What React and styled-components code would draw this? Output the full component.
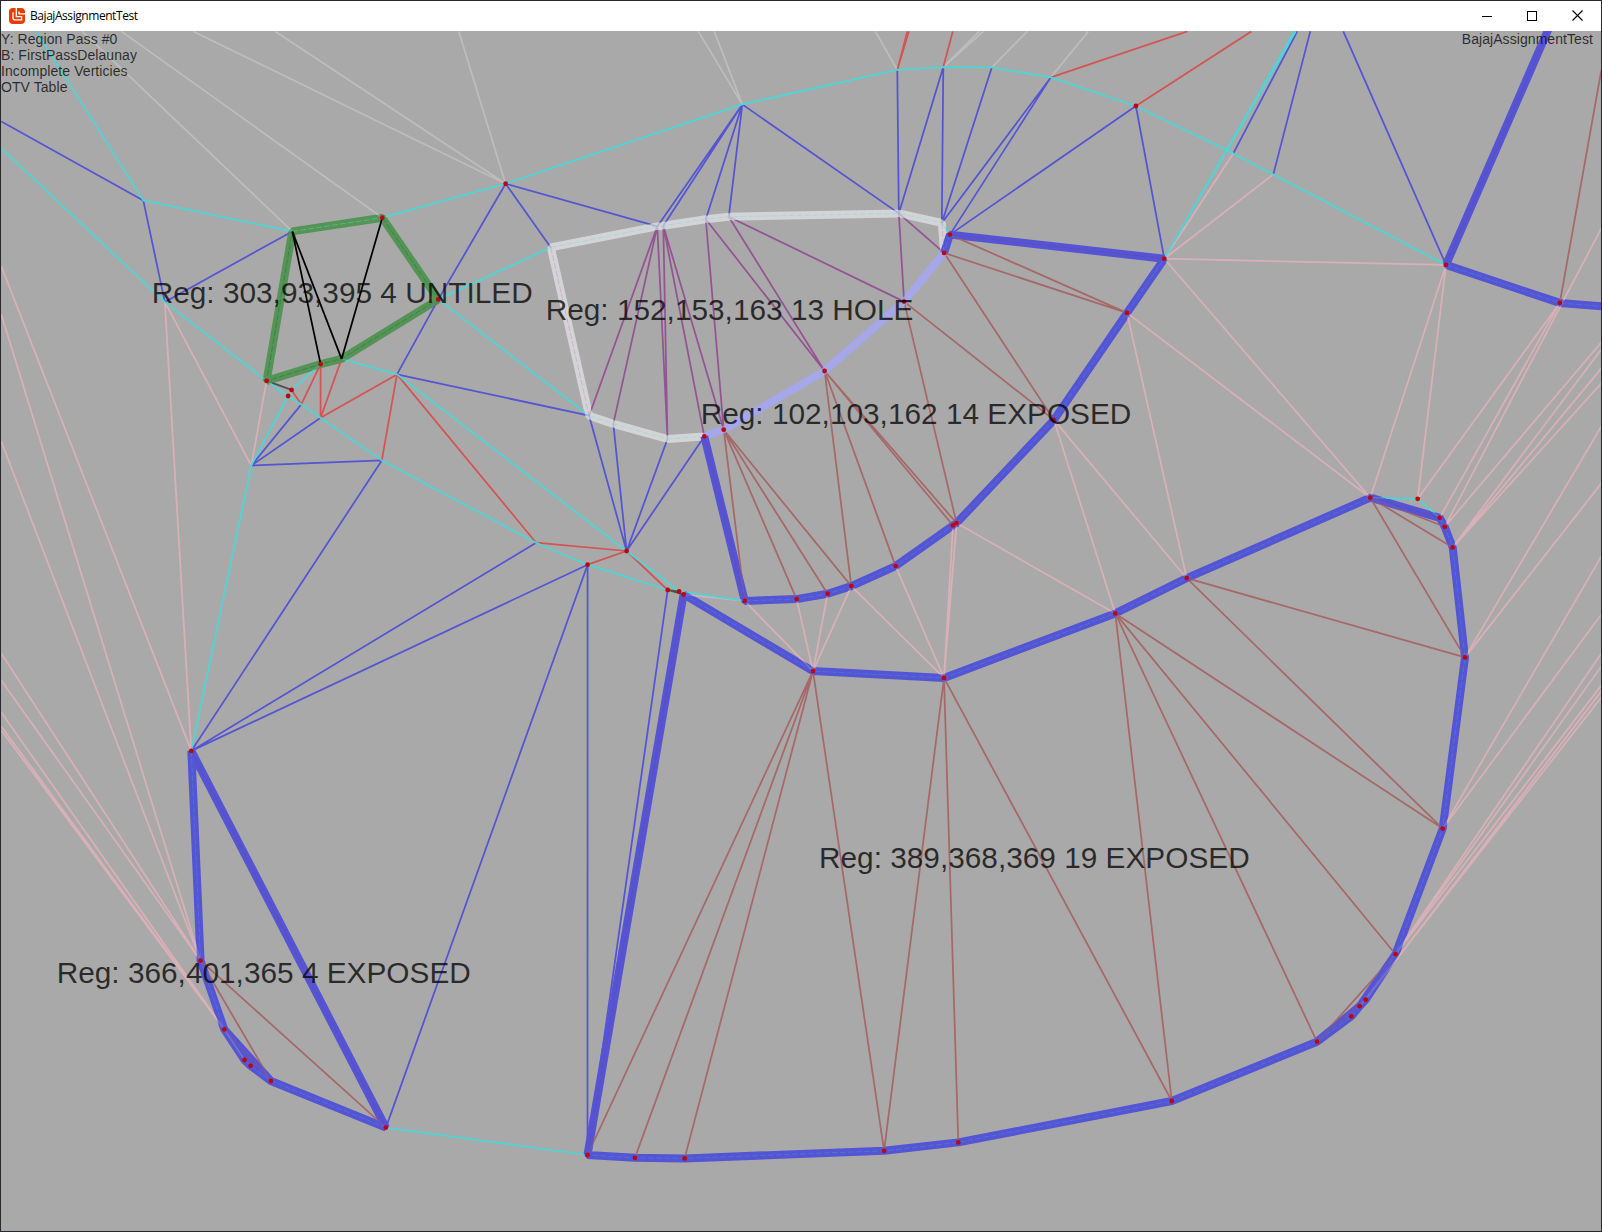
import React from "react";
import styled, { createGlobalStyle } from "styled-components";

const GlobalStyle = createGlobalStyle`
  * { box-sizing: border-box; }
  body { margin: 0; background: #26262b; overflow: hidden; }
`;

const Window = styled.div`
  width: 1602px;
  height: 1232px;
  display: flex;
  flex-direction: column;
  border: 1px solid #26292d;
  background: #a9a9a9;
`;

const TitleBar = styled.header`
  flex: none;
  height: 30px;
  display: flex;
  align-items: center;
  padding-left: 8px;
  background: #fff;
`;

const Title = styled.span`
  flex: 1;
  margin-left: 5px;
  font: 12px/30px "Open Sans", "Noto Sans", sans-serif;
  letter-spacing: -0.44px;
  color: #000;
`;

const WindowButton = styled.button`
  width: ${(p) => p.$width}px;
  height: 30px;
  display: grid;
  place-items: center;
  padding: 0 0 1px;
  border: 0;
  background: transparent;
`;

const Viewport = styled.main`
  position: relative;
  flex: 1;
  overflow: hidden;
`;

const Scene = styled.svg`
  display: block;
  width: 1600px;
  height: 1200px;
`;

const Hud = styled.div`
  position: absolute;
  top: 0;
  left: 0;
  right: 0;
  display: flex;
  justify-content: space-between;
  padding: 0 8px 0 0;
  font: 14px/16px "Liberation Sans", Arial, sans-serif;
  letter-spacing: 0.07px;
  color: rgba(0, 0, 0, 0.75);
`;

const HudColumn = styled.div`
  display: flex;
  flex-direction: column;
  white-space: pre;
`;

const RegionLabel = styled.text`
  font: 29.8px "Liberation Sans", Arial, sans-serif;
  fill: rgba(0, 0, 0, 0.75);
`;

const Edges = styled.path`
  fill: none;
  stroke: ${(p) => p.$color};
  stroke-width: ${(p) => p.$width || 1.75};
  stroke-linejoin: bevel;
`;

const Seam = styled(Edges)`
  stroke-width: 0.8;
  stroke-dasharray: 6 2;
  opacity: 0.5;
`;

const Vertex = styled.circle`
  fill: #bd0610;
`;

const V = {
  a: [143, 200], p: [164.5, 301.5],
  g1: [292, 231], g2: [382, 217.3], g3: [438, 299], g4: [266.3, 380.5], g5: [320.3, 363.7], g6: [341.3, 358.5],
  s: [505.3, 183.3], t: [742, 104],
  c1: [897, 69.5], c2: [943, 66.7], c3: [991.5, 67], c4: [1050.5, 77], c5: [1135.6, 105.6], c6: [1233, 153], c7: [1273, 174], c8: [1445.7, 264.5], c9: [1559.5, 302.5],
  h1: [550.5, 247], h2: [657, 226], h3: [663, 225.3], h4: [705.5, 218.8], h5: [728.5, 216.3], h6: [898.5, 213], h7: [941.5, 222.5],
  h8: [943.8, 252.5], h9: [903.8, 301.2], h10: [824.3, 370.6], h11: [723.4, 429.3], h12: [704, 436], h13: [667.2, 438.6], h14: [613, 423.5], h15: [588.8, 415.3],
  j: [949.6, 234.2], k: [1164, 258.3], l: [1126.7, 312.5], m: [1053.6, 419.5], n1: [952.7, 525], n2: [956.3, 522.7],
  o: [895.3, 565.7], q: [851, 585.7], r: [827.3, 593.3], u: [796.3, 598.7], v: [744.4, 600.5], w: [812.7, 670.7], x: [943.7, 677.5],
  y1: [683.3, 594], y0: [678.8, 591], y2: [667.4, 589.6],
  z: [626.3, 550.6], aa: [587.3, 564.3], ab: [535.8, 542.3], ac: [396.7, 374], ad: [381.5, 460], ae: [320.3, 417.3], af: [301, 404], ag: [291.3, 389.5], ah: [287.8, 395.6], ai: [251, 465.2],
  aj: [191, 750.5], ak: [200.3, 960.3], al: [224, 1029], am: [244.2, 1059.6], an: [250.3, 1065.4], ao: [270.6, 1080.6], ap: [385.6, 1127.2],
  b1: [587.2, 1154.6], b2: [634.6, 1157.4], b3: [684.3, 1158], b4: [883.8, 1150.4], b5: [958, 1142], b6: [1171.5, 1100.6], b7: [1316.7, 1041.3],
  b8: [1351, 1016], b9: [1359.4, 1005.8], b10: [1365.4, 999.3], b11: [1395.2, 953.8], b12: [1442.4, 828.2], b13: [1464.7, 657], b14: [1452.4, 547], b15: [1444.4, 526.4], b16: [1439.4, 517.4], b17: [1417.4, 498.4], b18: [1370, 497.3],
  d1: [1186.4, 577.8], d2: [1115, 613],
};

const isKey = (s) => /^[a-z]/.test(s);
const toPath = (list) =>
  list
    .trim()
    .split(/\s+/)
    .map((chain) =>
      chain
        .split(">")
        .map((p, i) => (i ? "L" : "M") + (isKey(p) ? V[p].join(" ") : p.replace(",", " ")))
        .join("")
    )
    .join("");

const THIN = [
  ["#bdbdbd", "82,31>g1 121,31>g2 193,31>s 275,31>s 458.5,31>s 698,31>t 714,31>t 875,31>c1 c2>979,31 c2>983,31 c3>1027,31 c4>1088,31"],
  ["#d9b0b8", `1,266>aj 1,314>ak 1,441>ak 1,653>ak 1,680>ak 1,712>al 1,726>al 1,730>al
    p>ai p>aj g4>ai k>c6 k>c7 k>c8 k>b18 l>b18 l>d1 m>d1 m>d2 n2>d2 n1>x n2>x o>x q>x q>w r>w u>w v>w y1>v
    b18>c8 b17>c8 b17>c9 b16>c9 b15>1601,228 b15>1601,342 b14>1601,349 b14>1601,368 b14>1601,383
    b13>1601,426 b13>1601,483 b12>1601,556 b12>1601,614 b11>1601,653 b11>1601,666 b11>1601,685 b10>1601,691 b9>1601,697 al>am`],
  ["#a66868", `j>l h8>l h8>m h9>m h9>n2 h10>n1 h10>n2 h10>o h10>q h11>v h11>u h11>r h11>q c9>1601,70
    w>b1 w>b2 w>b3 w>b4 x>b4 x>b5 x>b6 d2>b6 d2>b7 d2>b11 d2>b12 d1>b12 d1>b13 b18>b13 b18>b14 b18>b15
    b11>b7 b10>b7 ak>ap ak>ao al>ao`],
  ["#945494", "h2>h15 h2>h14 h2>h13 h3>h13 h3>h12 h3>h11 h4>h11 h4>h10 h5>h10 h5>h9 h6>h9 h6>h8"],
  ["#5454d4", `1,121>a a>p p>g1 s>h1 s>h2 s>g3 t>h2 t>h3 t>h4 t>h5 t>h6 c1>h6 c2>h6 c2>h7 c3>h7 c4>h7 c4>j c5>j c5>k
    c6>1297,31 c7>1310,31 c8>1343,31 g3>ac ac>h15 z>h15 z>h14 z>h13 z>h12 ab>aj aa>aj aa>ap aa>b1 y2>b1
    ad>aj ai>ad ai>ae ai>af`],
  ["#d45454", "c1>907,31 c1>908.5,31 c2>952.5,31 c4>1187,31 c5>1251,31 ag>af>g5>ae>g6 ae>ac>ad ac>ab>z>aa z>y2"],
  ["#505050", "g4>ag y2>y0 y2>y1"],
  ["#4cd6d6", `36,31>a>g1 1,148>p>g4>ah>af>ae>ad>ab>aa>y2 ah>ai>aj ag>g5 g6>ac>z>y0>v g3>h1 g3>h15 g2>s>t>c1>c2>c3>c4>c5>c6>c7>c8
    k>1294,31 k>1295.5,31 h7>j ap>b1 b18>b17>b16`],
];

const THICK = [
  ["#549454", "g1>g2>g3>g6>g5>g4>g1>g2"],
  ["#d4d4d6", "h12>h13>h14>h15>h1>h2>h3>h4>h5>h6>h7>h8"],
  ["#a6a6e8", "h8>h9>h10>h11>h12"],
  ["#5454d4", `h12>v>u>r>q>o>n1>n2>m>l>k>j>h8 1548,29>c8>c9>1603,306
    aj>ak>al>am>an>ao>ap>aj>ak al>ao
    y1>w>x>d2>d1>b18>b16>b15>b14>b13>b12>b11>b10>b9>b7>b6>b5>b4>b3>b2>b1>y1>w b11>b9>b8>b7`],
];

const SEAMS = [
  ["#3f9fd8", `v>u>r>q>o>n1>n2>m>l>k c8>c9>1601,306 aj>ak>al>am>an>ao>ap y1>w>x>d2>d1>b18
    b16>b15>b14>b13>b12>b11>b10>b9>b8>b7>b6>b5>b4>b3>b2>b1 j>h8`],
  ["#7d3f88", "h12>v j>k 1548,31>c8 aj>ap b1>y1 b18>b16 b7>b10 al>ao"],
  ["#5ce0e4", "h1>h2>h3>h4>h5>h6>h7 h12>h13>h14>h15 g1>g2"],
  ["#bd80bd", "h1>h15 h7>h8"],
  ["#8eb8ec", "h8>h9>h10>h11>h12"],
  ["#245c5c", "g2>g3>g6>g5>g4>g1"],
];

const DOTS = (
  "g2 g3 g4 g5 ag ah s c5 c8 c9 j k l m n1 n2 o q r u v w x y0 y1 y2 z aa h8 h9 h10 h11 h12 " +
  "aj ak al am an ao ap b1 b2 b3 b4 b5 b6 b7 b8 b9 b10 b11 b12 b13 b14 b15 b16 b17 b18 d1 d2"
).split(" ");

const REGIONS = [
  [151.7, 303.3, "Reg: 303,93,395 4 UNTILED"],
  [545.7, 320, "Reg: 152,153,163 13 HOLE"],
  [700.7, 424.3, "Reg: 102,103,162 14 EXPOSED"],
  [819, 868.3, "Reg: 389,368,369 19 EXPOSED"],
  [56.7, 983.3, "Reg: 366,401,365 4 EXPOSED"],
];

function Logo() {
  return (
    <svg width="16" height="16" viewBox="0 0 16 16">
      <rect width="16" height="16" rx="4" fill="#e73c00" />
      <path d="M7.3 0V8.6H12.6V11.9H6.2Q4 11.9 4 9.7V4.2" fill="none" stroke="#fff" strokeWidth="1.3" />
      <path d="M10 3.6V5.9H16" fill="none" stroke="#fff" strokeWidth="1.3" />
    </svg>
  );
}

export default function App() {
  return (
    <>
      <GlobalStyle />
      <Window>
        <TitleBar>
          <Logo />
          <Title>BajajAssignmentTest</Title>
          <WindowButton $width={46} aria-label="Minimize">
            <svg width="10" height="10"><path d="M0 5.5H10" stroke="#000" /></svg>
          </WindowButton>
          <WindowButton $width={44} aria-label="Maximize">
            <svg width="10" height="10"><rect x=".5" y=".5" width="9" height="9" fill="none" stroke="#000" /></svg>
          </WindowButton>
          <WindowButton $width={47} aria-label="Close">
            <svg width="11" height="11"><path d="M.5.5L10.5 10.5M10.5.5L.5 10.5" stroke="#000" strokeWidth="1.1" /></svg>
          </WindowButton>
        </TitleBar>
        <Viewport>
          <Scene viewBox="1 31 1600 1200">
            <mask id="outside" maskUnits="userSpaceOnUse" x="0" y="0" width="1602" height="1232">
              <rect width="1602" height="1232" fill="#fff" />
              {THICK.map(([c, d]) => <Edges key={c} $color="#404040" $width={7} d={toPath(d)} />)}
            </mask>
            <g transform="translate(.3 .4)">
              {THICK.map(([c, d]) => <Edges key={c} $color={c} $width={8} d={toPath(d)} />)}
              {THIN.map(([c, d]) => <Edges key={c} $color={c} d={toPath(d)} mask="url(#outside)" />)}
              {SEAMS.map(([c, d]) => <Seam key={c} $color={c} d={toPath(d)} />)}
              <Edges $color="#000" d={toPath("g1>g5 g1>g6 g2>g6")} />
              {DOTS.map((k) => <Vertex key={k} cx={V[k][0]} cy={V[k][1]} r={2.4} />)}
            </g>
            {REGIONS.map(([x, y, label]) => <RegionLabel key={label} x={x} y={y}>{label}</RegionLabel>)}
          </Scene>
          <Hud>
            <HudColumn>
              <span>Y: Region Pass #0</span>
              <span>B: FirstPassDelaunay</span>
              <span>Incomplete Verticies</span>
              <span>OTV Table</span>
            </HudColumn>
            <HudColumn>BajajAssignmentTest</HudColumn>
          </Hud>
        </Viewport>
      </Window>
    </>
  );
}
